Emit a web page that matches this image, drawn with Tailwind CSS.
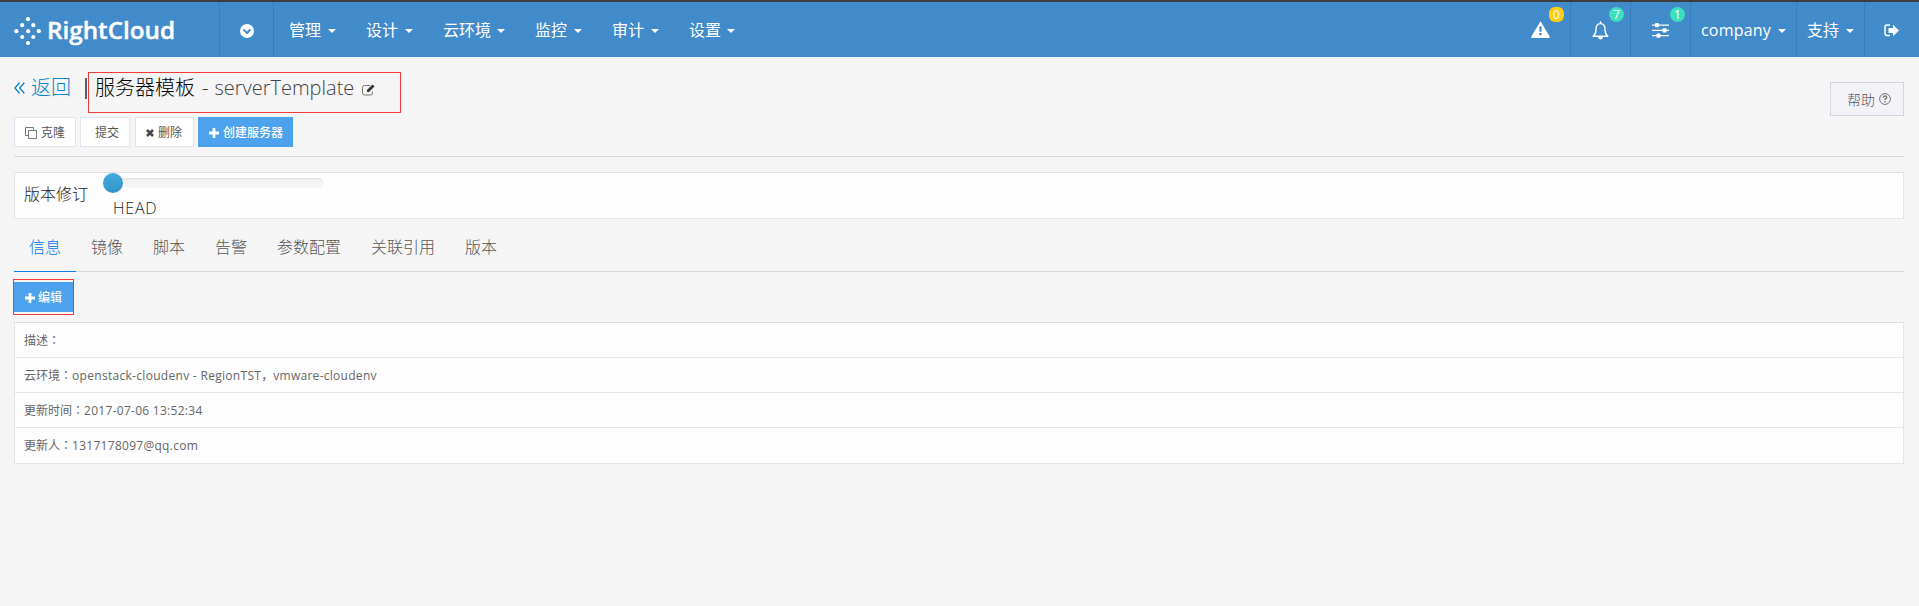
<!DOCTYPE html>
<html lang="zh-CN">
<head>
<meta charset="utf-8">
<title>RightCloud</title>
<script src="https://cdn.jsdelivr.net/npm/@tailwindcss/browser@4"></script>
</head>
<body class="h-[606px] overflow-hidden bg-[#f5f5f5] font-['Open_Sans','Noto_Sans_CJK_SC',sans-serif] text-[#333]">
<svg class="hidden">
  <symbol id="caret" viewBox="0 0 8 4"><path d="M0 0h8L4 4z" fill="currentColor"/></symbol>
  <symbol id="plus" viewBox="0 0 10 10"><path d="M3.6 0h2.8v3.6H10v2.8H6.4V10H3.6V6.4H0V3.6h3.6z" fill="currentColor"/></symbol>
</svg>

<header class="flex h-[57px] border-t-2 border-[#3d3d3d] bg-[#428bca] text-[16px] leading-none text-white">
  <a class="flex w-[220px] items-center border-r border-[#357ebd] pl-[14px]">
    <svg class="mt-[3px] h-[30px] w-[28px] shrink-0" viewBox="0 0 28 30" fill="#fff"><circle cx="14" cy="3.2" r="2.1"/><circle cx="8.2" cy="9.2" r="2.1"/><circle cx="19.3" cy="9.2" r="2.1"/><circle cx="2.4" cy="15.2" r="2.1"/><circle cx="14.2" cy="15.2" r="2.1"/><circle cx="24.8" cy="15.2" r="2.1"/><circle cx="8.2" cy="21" r="2.1"/><circle cx="19.3" cy="21" r="2.1"/><circle cx="14" cy="27" r="2.1"/></svg>
    <svg class="mt-[3px] h-[40px] w-[150px] overflow-visible" viewBox="0 0 150 40"><text x="5" y="28" textLength="128" lengthAdjust="spacingAndGlyphs" font-family="Open Sans" font-weight="600" font-size="23" fill="#fff" stroke="#fff" stroke-width=".4">RightCloud</text></svg>
  </a>
  <a class="flex w-[54px] items-center justify-center border-r border-[#357ebd]">
    <svg class="mt-[2px] size-[14px]" viewBox="0 0 14 14"><circle cx="7" cy="7" r="7" fill="#fff"/><path d="M3.5 5.5 7 9l3.500-3.500" fill="none" stroke="#428bca" stroke-width="2"/></svg>
  </a>
  <nav class="flex items-center">
    <a class="flex w-[77px] items-center gap-[7px] pl-[15px]">管理<svg class="mt-[3px] h-1 w-2"><use href="#caret"/></svg></a>
    <a class="flex w-[77px] items-center gap-[7px] pl-[15px]">设计<svg class="mt-[3px] h-1 w-2"><use href="#caret"/></svg></a>
    <a class="flex w-[92px] items-center gap-[6px] pl-[15px]">云环境<svg class="mt-[3px] h-1 w-2"><use href="#caret"/></svg></a>
    <a class="flex w-[77px] items-center gap-[7px] pl-[15px]">监控<svg class="mt-[3px] h-1 w-2"><use href="#caret"/></svg></a>
    <a class="flex w-[77px] items-center gap-[7px] pl-[15px]">审计<svg class="mt-[3px] h-1 w-2"><use href="#caret"/></svg></a>
    <a class="flex w-[77px] items-center gap-[6px] pl-[15px]">设置<svg class="mt-[3px] h-1 w-2"><use href="#caret"/></svg></a>
  </nav>
  <div class="ml-auto flex">
    <a class="relative flex w-[60px] items-center border-r border-[#357ebd] pl-5">
      <svg class="-mt-px h-[17px] w-[19px]" viewBox="0 0 19 17"><path d="M9.500 .2 18.700 15.500q.4 1.500-1.200 1.500H1.500Q-.1 17 .3 15.500z" fill="#fff"/><path d="M8.200 5.500h2.600l-.4 5.200H8.600zM8.300 12h2.400v2.300H8.300z" fill="#428bca"/></svg>
      <span class="absolute right-[6px] top-[5px] flex size-[15px] items-center justify-center rounded-[6px] bg-[#fecd0b] text-[12px]">0</span>
    </a>
    <a class="relative flex w-[60px] items-center border-r border-[#357ebd] pl-[21px]">
      <svg class="mt-px h-[19px] w-[17px]" viewBox="0 0 17 19" fill="none" stroke="#fff" stroke-width="1.400"><path d="M1.200 15.200Q4 12.800 4 8.200C4 4.700 5.500 2.600 8.500 2.600S13 4.700 13 8.200q0 4.600 2.800 7z" stroke-linejoin="round"/><path d="M8.500 .3v2.200"/><path d="M6 16h5q-.5 2.500-2.500 2.500T6 16z" fill="#fff" stroke="none"/></svg>
      <span class="absolute right-[6px] top-[5px] flex size-[15px] items-center justify-center rounded-full bg-[#3be0bd] text-[12px]">7</span>
    </a>
    <a class="relative flex w-[60px] items-center border-r border-[#357ebd] pl-[21px]">
      <svg class="mt-[2px] h-[15px] w-[17px]" viewBox="0 0 17 15" fill="#fff"><path d="M0 1.500h17v1.300H0zM0 6.700h17v1.300H0zM0 11.900h17v1.300H0z"/><rect x="3" y="0" width="4" height="4.300" rx="1"/><rect x="10.500" y="5.200" width="4" height="4.300" rx="1"/><rect x="4.500" y="10.400" width="4" height="4.300" rx="1"/></svg>
      <span class="absolute right-[5px] top-[5px] flex size-[15px] items-center justify-center rounded-full bg-[#3be0bd] text-[12px]">1</span>
    </a>
    <a class="flex w-[106px] items-center border-r border-[#357ebd] pl-[10px]"><span class="w-[77px] tracking-[0.2px]">company</span><svg class="mt-[3px] h-1 w-2"><use href="#caret"/></svg></a>
    <a class="flex w-[68px] items-center gap-[7px] border-r border-[#357ebd] pl-[10px]">支持<svg class="mt-[3px] h-1 w-2"><use href="#caret"/></svg></a>
    <a class="flex w-[54px] items-center pl-[19px]">
      <svg class="mt-[2px] h-[13px] w-[15px]" viewBox="0 0 15 13"><path d="M6 1H3Q1 1 1 3v6.500q0 2 2 2h3" fill="none" stroke="#fff" stroke-width="1.500"/><path d="M4.500 4H9V.800L15 6.500 9 12.200V9H4.500z" fill="#fff"/></svg>
    </a>
  </div>
</header>

<main class="px-[14px] pr-[15px]">
  <div class="flex h-[60px] justify-between">
    <div class="relative mt-[15px] flex h-[41px] text-[20px] leading-[31px]">
      <a class="flex w-[71px] items-center self-start font-light text-[#0088cc]">
        <svg class="mr-[6px] h-3 w-[11px]" viewBox="0 0 11 12" fill="none" stroke="currentColor" stroke-width="1.300"><path d="M5.500 .8.900 6l4.600 5.200M10.300.8 5.700 6l4.600 5.200"/></svg>返回</a>
      <span class="mt-[6px] h-[21px] w-[2px] bg-[#55606c]"></span>
      <h1 class="ml-[1px] flex w-[313px] items-start border border-[#f13a3a] pl-[6px] font-light"><span class="-mt-px text-black">服务器模板</span><span class="-mt-px ml-[7px]">-</span><span class="-mt-px ml-[6px] w-[148px] text-[#444]">serverTemplate</span>
        <svg class="mt-[11px] h-3 w-[13px]" viewBox="0 0 13 12" fill="none" stroke="#777"><path d="M8 1.500H2.500q-2 0-2 2V9q0 2 2 2h6q2 0 2-2V7.500"/><path d="M5 6 10.500.5l2 2L7 8H5z" fill="#333" stroke="none"/></svg>
      </h1>
    </div>
    <a class="mt-[25px] flex h-[34px] w-[74px] items-center border border-[#d2d6de] bg-[#f3f2f7] pl-4 text-[14px] font-light text-[#555]">帮助
      <svg class="ml-1 size-3" viewBox="0 0 12 12" fill="none" stroke="#777"><circle cx="6" cy="6" r="5.400"/><path d="M4.200 4.700Q4.300 3 6 3t1.800 1.500Q7.800 5.500 6 6.200v.9M6 8v1.300" stroke-width="1.400"/></svg></a>
  </div>

  <div class="flex h-[40px] items-start border-b border-[#dadada] text-[12px] text-[#555]">
    <a class="flex h-[30px] w-[62px] items-center border border-[#dce4ef] bg-white pl-[10px] pt-px"><svg class="mr-[4px] size-3" viewBox="0 0 12 12" fill="#fff" stroke="#777"><path d="M.5.500h8v8h-8z"/><path d="M3.500 3.500h8v8h-8z"/></svg>克隆</a>
    <a class="ml-1 flex h-[30px] w-[50px] items-center border border-[#dce4ef] bg-white pl-[14px] pt-px">提交</a>
    <a class="ml-[5px] flex h-[30px] w-[59px] items-center border border-[#dce4ef] bg-white pl-[10px] pt-px"><svg class="mr-[4px] mt-px size-2" viewBox="0 0 8 8"><path d="m1 1 6 6M7 1 1 7" stroke="#444" stroke-width="2.500"/></svg>删除</a>
    <a class="ml-1 flex h-[30px] w-[95px] items-center bg-[#4ca2ec] pl-[11px] pt-px font-medium text-white"><svg class="mr-[4px] size-[10px]"><use href="#plus"/></svg>创建服务器</a>
  </div>

  <section class="mt-[15px] flex h-[47px] border border-[#e5e5e5] border-t-[#dedede] bg-[#fdfdfd] pl-[9px] text-[16px] font-light leading-none text-[#222]">
    <span class="w-[79px] pt-[13px]">版本修订</span>
    <div>
      <div class="flex h-5 items-center">
        <span class="z-10 size-5 rounded-full bg-linear-to-b from-[#45a9dd] to-[#2f95c9]"></span>
        <span class="-ml-[10px] h-[10px] w-[210px] rounded-[4px] bg-linear-to-b from-[#f1f1f1] to-[#f8f8f8] shadow-[inset_0_1px_2px_rgba(0,0,0,0.08)]"></span>
      </div>
      <div class="pl-[10px] pt-[7px] font-['Open_Sans'] tracking-[0.8px]">HEAD</div>
    </div>
  </section>

  <nav class="flex h-[53px] border-b border-[#d9d9d9] text-[16px] font-light leading-[56px] text-[#555]">
    <a class="h-[53px] w-[62px] border-b border-[#0b7fe8] text-center text-[#0077ee]">信息</a>
    <a class="w-[62px] text-center">镜像</a>
    <a class="w-[62px] text-center">脚本</a>
    <a class="w-[62px] text-center">告警</a>
    <a class="w-[94px] text-center">参数配置</a>
    <a class="w-[94px] text-center">关联引用</a>
    <a class="w-[62px] text-center">版本</a>
  </nav>

  <div class="-ml-px mt-[7px] h-[36px] w-[61px] border border-[#f13a3a] bg-[#fdf6f6] py-[2px]">
    <a class="flex h-[30px] items-center bg-[#4ca2ec] pl-[11px] pt-[2px] text-[12px] font-medium text-white"><svg class="mr-[3px] size-[10px]"><use href="#plus"/></svg>编辑</a>
  </div>

  <ul class="mt-[7px] divide-y divide-[#e5e5e5] border border-[#e5e5e5] border-t-[#dedede] bg-[#fdfdfd] text-[12px] leading-[34px] text-[#666]">
    <li class="h-[35px] pl-[9px]">描述<span class="font-['Noto_Sans_CJK_JP']" lang="ja">：</span></li>
    <li class="h-[35px] pl-[9px]">云环境<span class="font-['Noto_Sans_CJK_JP']" lang="ja">：</span><span class="tracking-[0.3px]">openstack-cloudenv - RegionTST</span>，<span class="tracking-[0.28px]">vmware-cloudenv</span></li>
    <li class="h-[35px] pl-[9px]">更新时间<span class="font-['Noto_Sans_CJK_JP']" lang="ja">：</span><span class="tracking-[0.28px]">2017-07-06 13:52:34</span></li>
    <li class="h-[35px] pl-[9px]">更新人<span class="font-['Noto_Sans_CJK_JP']" lang="ja">：</span><span class="tracking-[0.28px]">1317178097@qq.com</span></li>
  </ul>
</main>
</body>
</html>
